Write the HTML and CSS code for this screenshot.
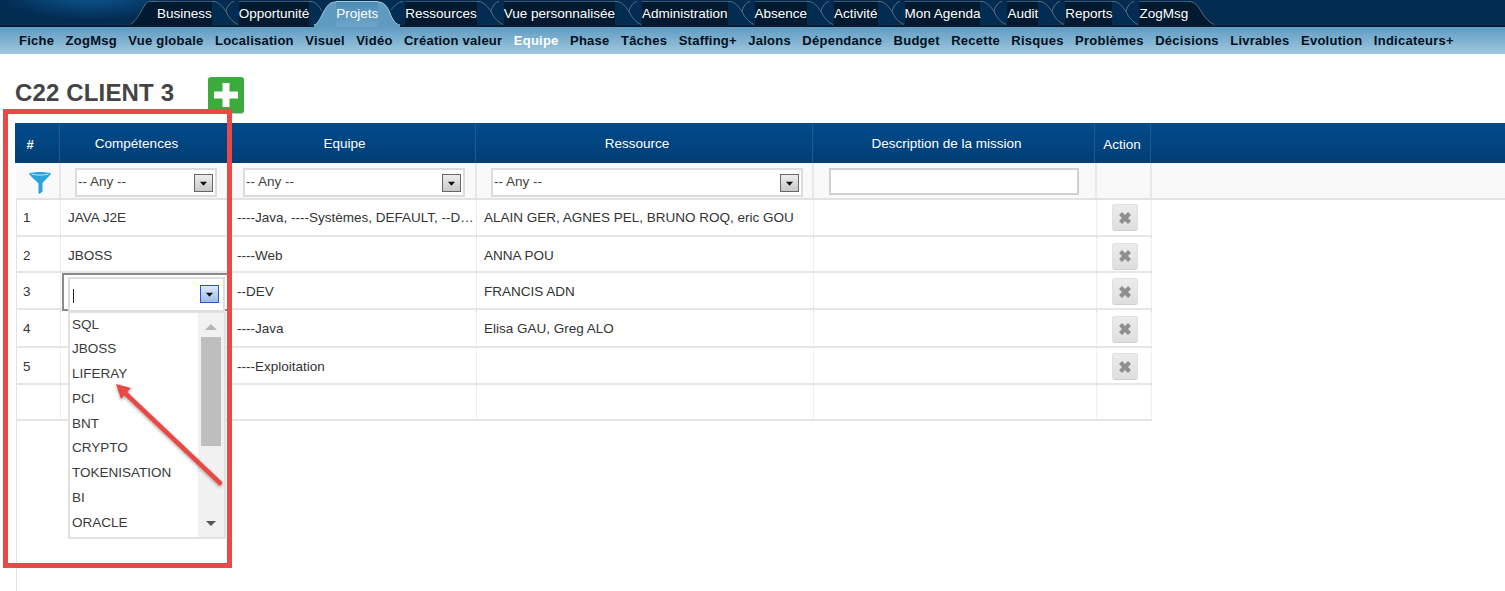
FILE: index.html
```html
<!DOCTYPE html>
<html lang="fr">
<head>
<meta charset="utf-8">
<title>C22 CLIENT 3</title>
<link rel="stylesheet" href="styles.css">
</head>
<body>
<svg class="defs" width="0" height="0" aria-hidden="true">
  <symbol id="cap" viewBox="0 0 30 27">
    <path d="M30 1.5H24C20 1.5 19 3 16 8 13 13 10 20 4 24V25H30Z" fill="#021a2f"/>
    <path d="M30 1.5H24C20 1.5 19 3 16 8 13 13 10 20 4 24" fill="none" stroke="#4f6a7c"/>
  </symbol>
  <symbol id="sep" viewBox="0 0 27 27">
    <path d="M0 0V1.5H2C7 2 11 7 14 11.5 15 7 18 2 22 1.5H27V0Z" fill="#032c52"/>
    <path d="M0 1.5H2C7 2 11 7 14 11.5M22 1.5C18 2 15 7 14 11.5 16 16 20 22 26 24.5" fill="none" stroke="#56707f"/>
  </symbol>
  <symbol id="sep-in" viewBox="0 0 27 27">
    <path d="M0 0V1.5H2C7 2 10 6 13 11 14 7 19 1.5 24 1.5H27V0Z" fill="#032c52"/>
    <path d="M27 2C20 2 18 6 14 13 11 19 8 25 5 25V27H27Z" fill="#5f9ac0"/>
    <path d="M27 2C20 2 18 6 14 13 11 19 8 25 5 25" fill="none" stroke="#a9cbdd"/>
    <path d="M0 1.5H2C7 2 10 6 13 11" fill="none" stroke="#56707f"/>
  </symbol>
  <symbol id="sep-out" viewBox="0 0 27 27">
    <path d="M0 0V1.5C7 2 10 7 13 11 14 7 18 2 24 1.5H27V0Z" fill="#032c52"/>
    <path d="M0 2C6 2 9 6 12 13 14 19 18 25 22 25V27H0Z" fill="#5f9ac0"/>
    <path d="M0 2C6 2 9 6 12 13 14 19 18 25 22 25" fill="none" stroke="#a9cbdd"/>
    <path d="M25 1.5C20 2 16 6 13 10" fill="none" stroke="#56707f"/>
  </symbol>
  <symbol id="end" viewBox="0 0 30 27">
    <path d="M0 1.5H2C7 2 10 6 13 11 16 16 20 22 26 24.5V25H0Z" fill="#021a2f"/>
    <path d="M0 1.5H2C7 2 10 6 13 11 16 16 20 22 26 24.5" fill="none" stroke="#56707f"/>
  </symbol>
  <symbol id="cross" viewBox="0 0 16 16">
    <path d="M2 5 5 2 8 5 11 2 14 5 11 8 14 11 11 14 8 11 5 14 2 11 5 8Z" fill="#8f8f8f"/>
  </symbol>
  <symbol id="caret" viewBox="0 0 19 19">
    <path d="M5.5 7.500H13.500L9.500 12Z" fill="#111"/>
  </symbol>
</svg>

<nav class="tabs">
  <svg class="cap"><use href="#cap"/></svg>
  <a class="tab">Business</a>
  <svg class="sep"><use href="#sep"/></svg>
  <a class="tab">Opportunité</a>
  <svg class="sep"><use href="#sep-in"/></svg>
  <a class="tab active">Projets</a>
  <svg class="sep"><use href="#sep-out"/></svg>
  <a class="tab">Ressources</a>
  <svg class="sep"><use href="#sep"/></svg>
  <a class="tab">Vue personnalisée</a>
  <svg class="sep"><use href="#sep"/></svg>
  <a class="tab">Administration</a>
  <svg class="sep"><use href="#sep"/></svg>
  <a class="tab">Absence</a>
  <svg class="sep"><use href="#sep"/></svg>
  <a class="tab">Activité</a>
  <svg class="sep"><use href="#sep"/></svg>
  <a class="tab">Mon Agenda</a>
  <svg class="sep"><use href="#sep"/></svg>
  <a class="tab">Audit</a>
  <svg class="sep"><use href="#sep"/></svg>
  <a class="tab">Reports</a>
  <svg class="sep"><use href="#sep"/></svg>
  <a class="tab">ZogMsg</a>
  <svg class="cap"><use href="#end"/></svg>
</nav>

<nav class="subnav">
  <a>Fiche</a><a>ZogMsg</a><a>Vue globale</a><a>Localisation</a><a>Visuel</a><a>Vidéo</a><a>Création valeur</a><a class="current">Equipe</a><a>Phase</a><a>Tâches</a><a>Staffing+</a><a>Jalons</a><a>Dépendance</a><a>Budget</a><a>Recette</a><a>Risques</a><a>Problèmes</a><a>Décisions</a><a>Livrables</a><a>Evolution</a><a>Indicateurs+</a>
</nav>

<main class="page">
  <div class="title-row">
    <h1>C22 CLIENT 3</h1>
    <button class="add" type="button" aria-label="Ajouter">
      <svg width="26" height="26" viewBox="0 0 26 26"><path d="M9.500 1H16.500V9.500H25V16.500H16.500V25H9.500V16.500H1V9.500H9.500Z" fill="#fff"/></svg>
    </button>
  </div>

  <div class="grid-head">
    <div class="hc">#</div>
    <div class="hc">Compétences</div>
    <div class="hc">Equipe</div>
    <div class="hc">Ressource</div>
    <div class="hc">Description de la mission</div>
    <div class="hc action">Action</div>
    <div class="hc blank"></div>
  </div>

  <div class="rail">
    <div class="filters">
      <div class="fc icon">
        <svg width="24" height="24" viewBox="0 0 24 24"><path d="M1 3.500C5 1.500 19 1.500 23 3.500 23 5 15.500 11 14.500 13.500V21.500L11.500 24 10.500 23V13.500C8.500 11 1 5 1 3.500Z" fill="#2aa3dd"/><path d="M3.500 4C8 5.500 16 5.500 20.500 4" fill="none" stroke="#bfe5f7"/></svg>
      </div>
      <div class="fc"><div class="sel s1">-- Any --<span class="btn"><svg width="17" height="17"><use href="#caret"/></svg></span></div></div>
      <div class="fc"><div class="sel s2">-- Any --<span class="btn"><svg width="17" height="17"><use href="#caret"/></svg></span></div></div>
      <div class="fc"><div class="sel s3">-- Any --<span class="btn"><svg width="17" height="17"><use href="#caret"/></svg></span></div></div>
      <div class="fc"><div class="txt"></div></div>
      <div class="fc"></div>
      <div class="fc end"></div>
    </div>

    <div class="row h37 r1">
      <div class="c">1</div><div class="c">JAVA J2E</div><div class="c clip">----Java, ----Systèmes, DEFAULT, --DEV</div><div class="c">ALAIN GER, AGNES PEL, BRUNO ROQ, eric GOU</div><div class="c"></div>
      <div class="c del"><button class="x" type="button" aria-label="Supprimer"><svg width="16" height="16"><use href="#cross"/></svg></button></div>
    </div>
    <div class="row h36 r2">
      <div class="c">2</div><div class="c">JBOSS</div><div class="c">----Web</div><div class="c">ANNA POU</div><div class="c"></div>
      <div class="c del"><button class="x" type="button" aria-label="Supprimer"><svg width="16" height="16"><use href="#cross"/></svg></button></div>
    </div>
    <div class="row h37">
      <div class="c">3</div>
      <div class="c edit">
        <div class="cellbox"></div>
        <div class="combo"><span class="caret-bar"></span><span class="btn focus"><svg width="17" height="17"><use href="#caret"/></svg></span></div>
        <div class="drop">
          <ul>
            <li>SQL</li><li>JBOSS</li><li>LIFERAY</li><li>PCI</li><li>BNT</li><li>CRYPTO</li><li>TOKENISATION</li><li>BI</li><li>ORACLE</li>
          </ul>
          <div class="scroll">
            <svg class="up" width="14" height="8" viewBox="0 0 14 8"><path d="M1 7H13L7 1Z" fill="#b5b5b5"/></svg>
            <div class="thumb"></div>
            <svg class="down" width="14" height="8" viewBox="0 0 14 8"><path d="M2 1H12L7 6Z" fill="#555"/></svg>
          </div>
        </div>
      </div>
      <div class="c">--DEV</div><div class="c">FRANCIS ADN</div><div class="c"></div>
      <div class="c del"><button class="x" type="button" aria-label="Supprimer"><svg width="16" height="16"><use href="#cross"/></svg></button></div>
    </div>
    <div class="row h38">
      <div class="c">4</div><div class="c"></div><div class="c">----Java</div><div class="c">Elisa GAU, Greg ALO</div><div class="c"></div>
      <div class="c del"><button class="x" type="button" aria-label="Supprimer"><svg width="16" height="16"><use href="#cross"/></svg></button></div>
    </div>
    <div class="row h37">
      <div class="c">5</div><div class="c"></div><div class="c">----Exploitation</div><div class="c"></div><div class="c"></div>
      <div class="c del"><button class="x" type="button" aria-label="Supprimer"><svg width="16" height="16"><use href="#cross"/></svg></button></div>
    </div>
    <div class="row h36">
      <div class="c"></div><div class="c"></div><div class="c"></div><div class="c"></div><div class="c"></div><div class="c"></div>
    </div>
  </div>
</main>

<div class="frame"></div>
<svg class="arrow" width="1505" height="591" viewBox="0 0 1505 591">
  <defs><filter id="sh" x="-10%" y="-10%" width="130%" height="130%"><feDropShadow dx="0" dy="1.500" stdDeviation="1.500" flood-color="#000" flood-opacity=".35"/></filter></defs>
  <g filter="url(#sh)">
    <path d="M220 483 125 393" stroke="#e94a45" stroke-width="4.500" stroke-linecap="round" fill="none"/>
    <path d="M116 384 131 388 121 399Z" fill="#e94a45"/>
  </g>
</svg>
</body>
</html>
```
FILE: styles.css
```css
* { box-sizing: border-box; }
html, body { height: 100%; }
body {
  margin: 0;
  overflow: hidden;
  position: relative;
  display: flex;
  flex-direction: column;
  background: #fff;
  color: #333;
  font: 13.500px/1 "Liberation Sans", Arial, sans-serif;
}
.defs { position: absolute; }

.tabs {
  display: flex;
  height: 27px;
  flex: none;
  padding-left: 127px;
  background:
    radial-gradient(ellipse 90px 26px at 90px -6px, #0d5a95 0%, rgba(13,90,149,0) 100%),
    linear-gradient(#032c52 0 24px, #0b3150 24px 25px, #021c33 25px);
}
.cap { width: 30px; height: 27px; flex: none; }
.sep { width: 27px; height: 27px; flex: none; }
.tab {
  height: 25px;
  margin-top: 1px;
  border-top: 1px solid #3c566a;
  background: #021a2f;
  color: #fff;
  line-height: 23px;
  white-space: nowrap;
}
.tab.active {
  height: 26px;
  background: linear-gradient(#4d8cb7, #6fa5c7);
  border-top-color: #a9cbdd;
}

.subnav {
  display: flex;
  flex: none;
  gap: 11.400px;
  height: 27px;
  padding-left: 19px;
  background: linear-gradient(#5f9bc3, #a0c8de);
  color: #02101c;
  font-size: 13px;
  font-weight: 700;
  line-height: 27px;
  letter-spacing: .25px;
  white-space: nowrap;
}
.subnav .current { color: #fff; }

.page { flex: 1; display: flex; flex-direction: column; padding-left: 15px; min-height: 0; }
.title-row { display: flex; height: 69px; align-items: flex-start; }
h1 {
  margin: 27px 0 0;
  font-size: 24px;
  line-height: 24px;
  font-weight: 700;
  color: #444;
  letter-spacing: .15px;
}
.add {
  width: 36px;
  height: 36px;
  margin: 23px 0 0 34px;
  padding: 0;
  display: flex;
  align-items: center;
  justify-content: center;
  border: 0;
  border-radius: 3px;
  background: #3bab3c;
  box-shadow: 0 1px 0 #bfbfbf;
}

.grid-head {
  display: grid;
  flex: none;
  grid-template-columns: 45px 168px 248px 337px 282px 56px 1fr;
  height: 40px;
  background: linear-gradient(#014b8b, #023e76);
}
.hc {
  display: flex;
  align-items: center;
  justify-content: center;
  padding: 2px 14px 0 0;
  border-right: 1px solid #1f5b92;
  color: #fff;
}
.hc:first-child { font-weight: 700; font-size: 13px; }
.hc.action { padding: 4px 1px 0 0; }
.hc.blank { border: 0; }

.rail {
  flex: 1;
  padding-left: 1px;
  background: linear-gradient(#e2e2e2, #e2e2e2) 1px 0 / 1px 100% no-repeat;
}
.filters, .row {
  display: grid;
  grid-template-columns: 45px 168px 248px 337px 283px 55px 1fr;
}
.filters {
  height: 37px;
  background: #f9f9f9;
  border-bottom: 2px solid #e2e2e2;
}
.fc {
  position: relative;
  border-right: 2px solid #e8e8e8;
  padding-top: 5px;
}
.fc.end { border: 0; }
.fc.icon { padding: 7px 0 0 12px; }
.sel, .txt {
  position: relative;
  height: 29px;
  border: 2px solid #dcdcdc;
  background: #fff;
  line-height: 24px;
  padding-left: 1px;
  color: #444;
}
.s1 { width: 142px; margin-left: 14px; }
.s2 { width: 222px; margin-left: 14px; }
.s3 { width: 312px; margin-left: 14px; }
.txt { width: 250px; height: 27px; margin-left: 15px; border-color: #d0d0d0; }
.btn {
  position: absolute;
  top: 4px;
  right: 2px;
  width: 19px;
  height: 18px;
  border: 1px solid #666;
  background: linear-gradient(#eee, #c8c8c8);
}
.btn svg { display: block; }

.row { width: 1136px; border-bottom: 2px solid #e6e6e6; }
.h36 { height: 36px; }
.h37 { height: 37px; }
.h38 { height: 38px; }
.c {
  position: relative;
  display: flex;
  align-items: center;
  padding: 2px 0 0 7px;
  border-right: 1px dotted #e0e0e0;
  white-space: nowrap;
}
.r1 .c { padding-top: 0; }
.r2 .c { padding-top: 4px; }
.clip { display: block; line-height: 35px; overflow: hidden; text-overflow: ellipsis; }
.row .c:nth-child(3) { padding-left: 8px; }
.row .del { justify-content: center; padding-left: 2px; }
.x {
  display: flex;
  align-items: center;
  justify-content: center;
  width: 26px;
  height: 27px;
  padding: 0;
  border: 1px solid #e0e0e0;
  border-bottom-color: #cfcfcf;
  border-radius: 3px;
  background: linear-gradient(#ececec, #dedede);
}

/* open inline editor over row 3 */
.cellbox {
  position: absolute;
  left: 1px;
  top: 0;
  right: -1px;
  height: 38px;
  border: 2px solid #8a8a8a;
  border-right-color: transparent;
  border-bottom-color: #8a8a8a;
  background: #fff;
  z-index: 2;
}
.combo {
  position: absolute;
  left: 7px;
  top: 4px;
  width: 157px;
  height: 35px;
  border: 2px solid #dedede;
  background: #fff;
  z-index: 3;
}
.caret-bar { position: absolute; left: 3px; top: 10px; width: 1px; height: 14px; background: #222; }
.btn.focus {
  top: 6px;
  right: 4px;
  border-color: #2a55d0;
  background: linear-gradient(#dfe8fb, #9fbbed);
}
.drop {
  position: absolute;
  left: 7px;
  top: 39px;
  width: 158px;
  height: 227px;
  display: flex;
  border: 2px solid #e2e2e2;
  border-top-width: 1px;
  background: #fff;
  z-index: 4;
}
.drop ul {
  flex: 1;
  list-style: none;
  margin: -.5px 0 0;
  padding: 0 0 0 2px;
  line-height: 24.800px;
  color: #3a3a3a;
}
.scroll {
  position: relative;
  width: 26px;
  background: #f1f1f1;
  display: flex;
  flex-direction: column;
  align-items: center;
}
.scroll .up { position: absolute; top: 10px; }
.scroll .down { position: absolute; bottom: 9px; }
.thumb { width: 20px; height: 109px; margin-top: 24px; background: #bebebe; }

/* annotation overlay */
.frame {
  position: absolute;
  left: 3px;
  top: 109px;
  width: 229px;
  height: 459px;
  border: 5px solid #e94a45;
  z-index: 5;
}
.arrow { position: absolute; left: 0; top: 0; z-index: 6; pointer-events: none; }
```
